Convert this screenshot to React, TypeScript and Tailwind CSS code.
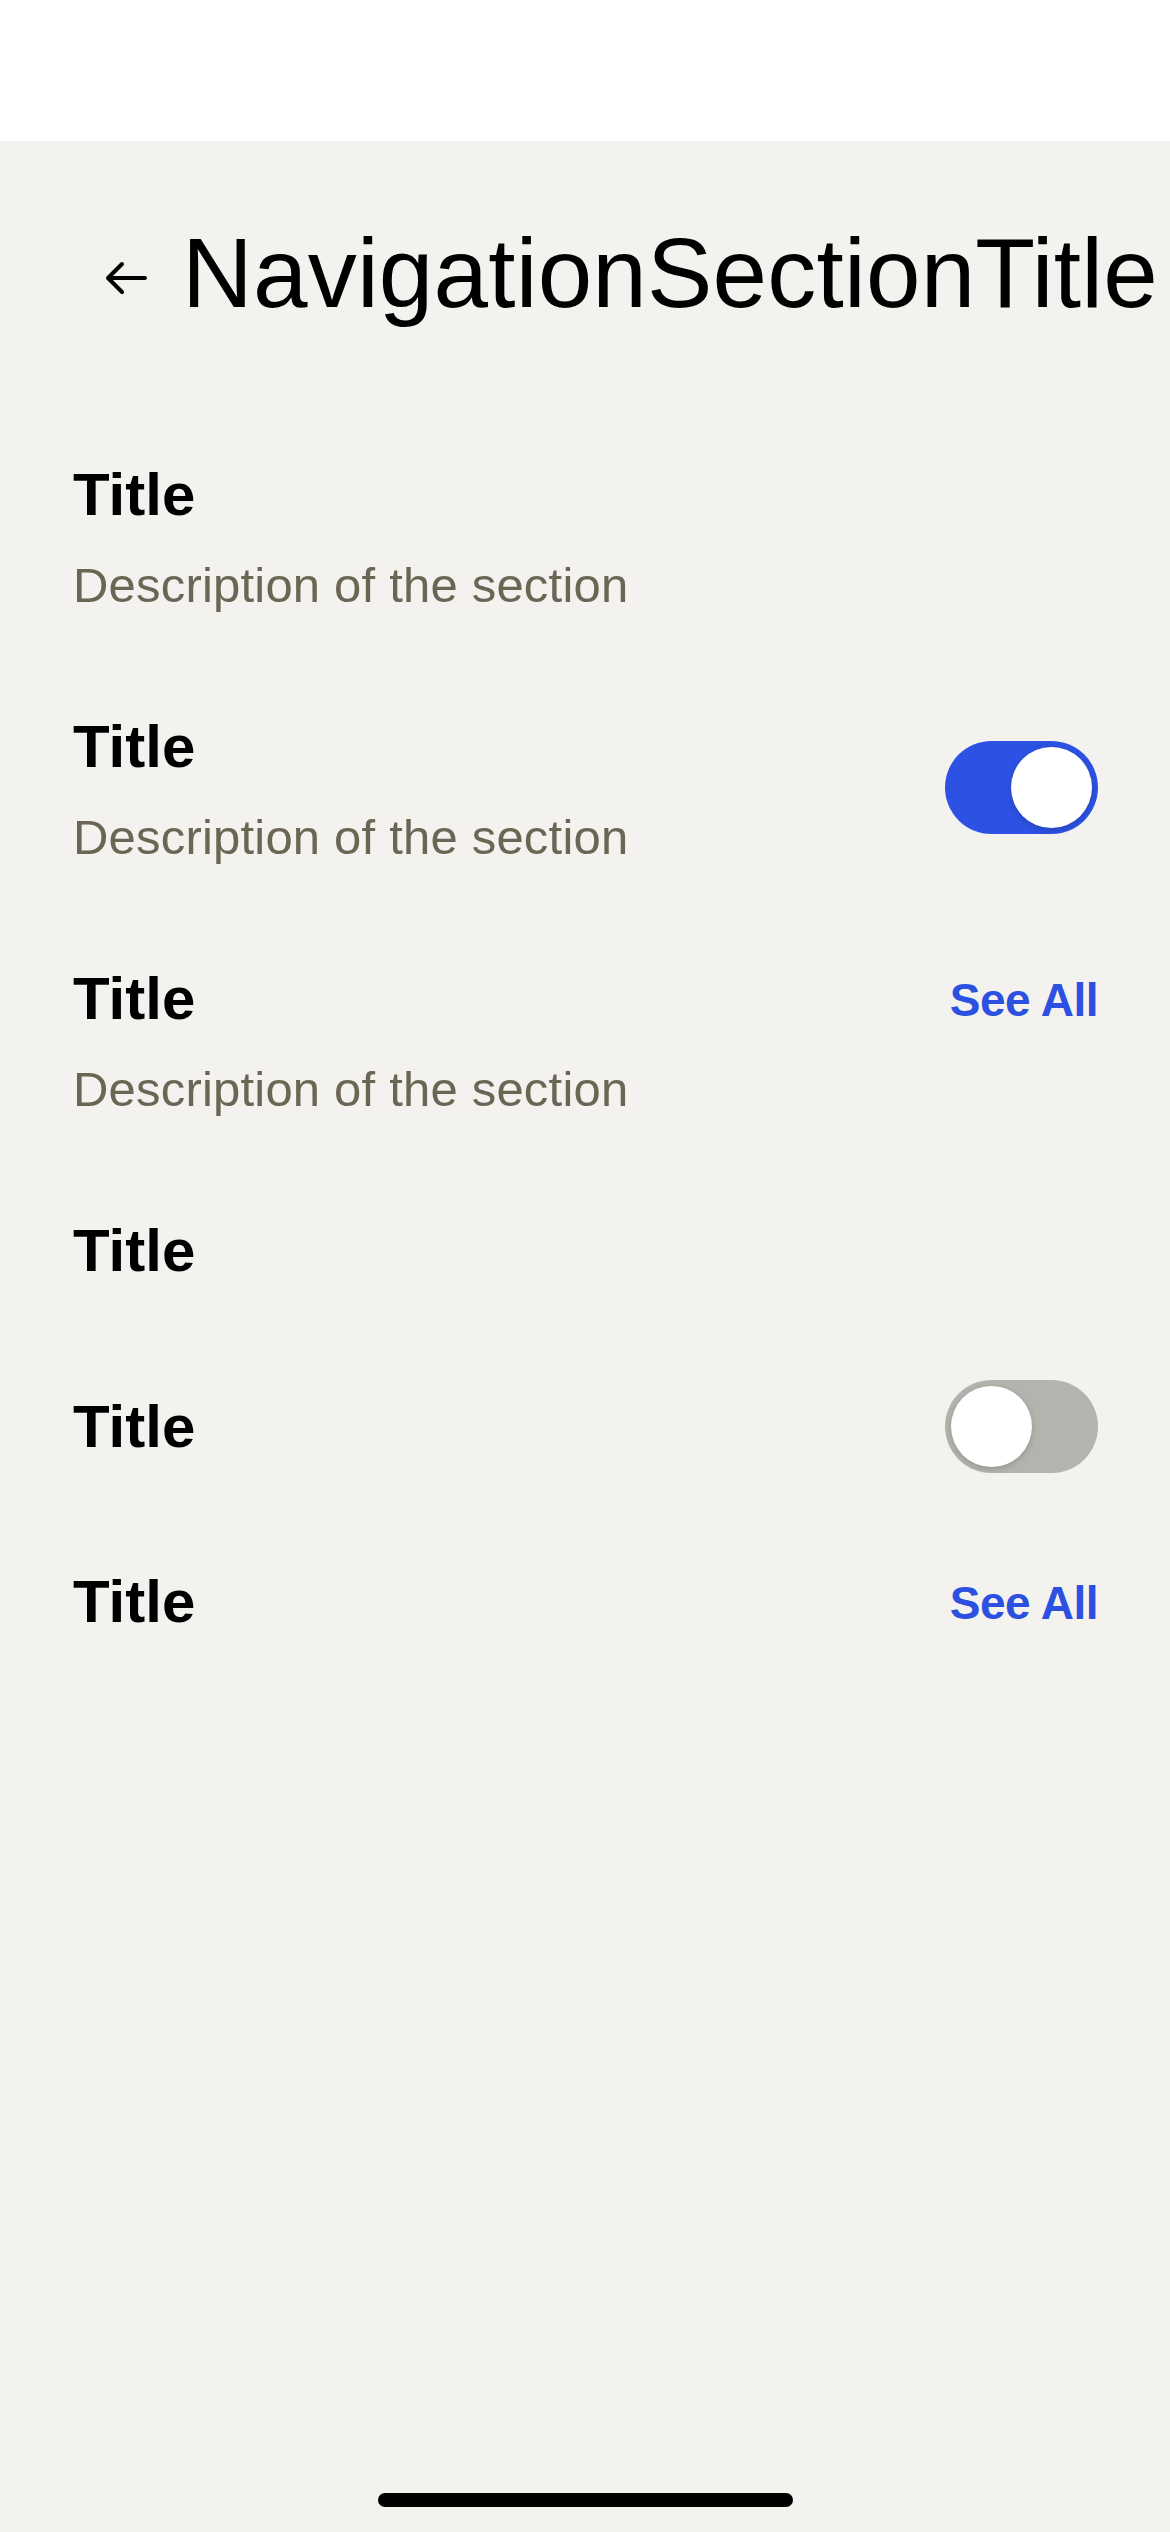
import { useState } from "react"

const rows = [
  { id: 1, title: "Title", description: "Description of the section", action: "none" },
  { id: 2, title: "Title", description: "Description of the section", action: "toggle-on" },
  { id: 3, title: "Title", description: "Description of the section", action: "see-all" },
  { id: 4, title: "Title", action: "none" },
  { id: 5, title: "Title", action: "toggle-off" },
  { id: 6, title: "Title", action: "see-all" },
]

const Toggle = ({ initial }: { initial: boolean }) => {
  const [on, setOn] = useState(initial)
  return (
    <button
      onClick={() => setOn(!on)}
      className={`flex h-[93px] w-[153px] shrink-0 items-center rounded-full p-[6px] ${
        on ? "justify-end bg-[#2d52e3]" : "justify-start bg-[#b5b3ae]"
      }`}
    >
      <span className="h-[81px] w-[81px] rounded-full bg-white shadow-[0_2px_6px_rgba(0,0,0,0.18)]" />
    </button>
  )
}

const SeeAll = () => (
  <span className="mt-[1px] text-[46px] font-semibold leading-[86px] tracking-[-0.5px] text-[#2c50e0]">See All</span>
)

export default function App() {
  return (
    <div className="flex min-h-[2532px] flex-col bg-[#f3f2ef] font-['Liberation_Sans',Arial,sans-serif] text-black">
      <div className="h-[141px] bg-white" />

      <div className="mt-[74px] flex items-center pl-[105px]">
        <svg
          className="mr-[35px] mt-[10px] h-[34px] w-[42px]"
          viewBox="0 0 42 34"
          fill="none"
          stroke="black"
          strokeWidth="4"
          strokeLinecap="round"
          strokeLinejoin="round"
        >
          <path d="M40 17H4M17 3L3 17l14 14" />
        </svg>
        <h1 className="whitespace-nowrap text-[98px] font-normal leading-[116px] tracking-[0.2px]">NavigationSectionTitle</h1>
      </div>

      <div className="mt-[78px] flex flex-col pl-[73px] pr-[72px]">
        {rows.map((row) => (
          <div
            key={row.id}
            className={`flex justify-between py-[43px] ${row.action === "see-all" ? "items-start" : "items-center"}`}
          >
            <div className="flex flex-col">
              <p className="text-[60px] font-semibold leading-[86px]">{row.title}</p>
              {row.description && (
                <p className="mt-[15px] text-[49px] leading-[65px] tracking-[0.2px] text-[#6b6553]">{row.description}</p>
              )}
            </div>
            {row.action === "toggle-on" && <Toggle initial={true} />}
            {row.action === "toggle-off" && <Toggle initial={false} />}
            {row.action === "see-all" && <SeeAll />}
          </div>
        ))}
      </div>

      <div className="flex-1" />
      <div className="flex justify-center pb-[25px]">
        <div className="h-[14px] w-[415px] rounded-full bg-black" />
      </div>
    </div>
  )
}
